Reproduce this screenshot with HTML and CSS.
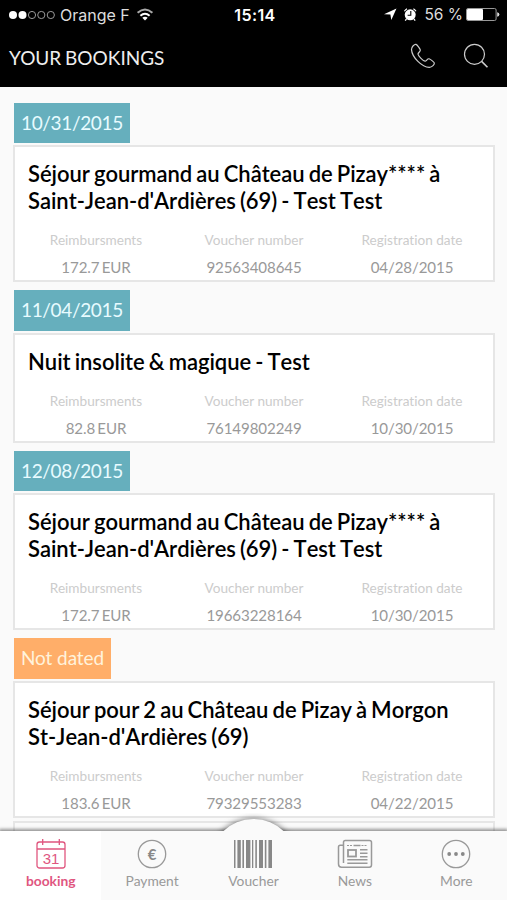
FILE: index.html
```html
<!DOCTYPE html>
<html lang="en">
<head>
  <meta charset="UTF-8">
  <title>Your Bookings</title>
  <link rel="stylesheet" href="styles.css">
</head>
<body>

  <header>
    <div class="status">
      <div class="carrier">
        <svg width="48" height="10" viewBox="0 0 48 10">
          <g fill="#fff"><circle cx="5" cy="5" r="4"/><circle cx="14.5" cy="5" r="4"/></g>
          <g fill="none" stroke="#999" stroke-width="1"><circle cx="24" cy="5" r="3.6"/><circle cx="33.3" cy="5" r="3.6"/><circle cx="42.8" cy="5" r="3.6"/></g>
        </svg>
        <span>Orange F</span>
        <svg class="wifi" width="18" height="13" viewBox="0 0 18 13" fill="none" stroke="#fff" stroke-width="2">
          <path d="M1.6 4.8Q9 -1.8 16.4 4.8" stroke="#aaa"/>
          <path d="M4.4 7.8Q9 3.8 13.6 7.8"/>
          <path d="M9 12.5L6.3 9.8Q9 7.6 11.7 9.8Z" fill="#fff" stroke="none"/>
        </svg>
      </div>
      <div class="time">15:14</div>
      <div class="battery">
        <svg width="34" height="15" viewBox="0 0 34 15">
          <path d="M0 7.3L12.5 1.5L7.3 13L6.4 7.5Z" fill="#fff"/>
          <circle cx="26.2" cy="7.8" r="5.5" fill="#fff"/>
          <path d="M20.4 4.2A7 7 0 0 1 23 1.7M29.4 1.7A7 7 0 0 1 32 4.2M22.5 12L21.2 13.6M29.9 12L31.2 13.6" stroke="#fff" stroke-width="1.2" fill="none"/>
          <path d="M26.8 4V8.2H23.6" stroke="#000" stroke-width="1.1" fill="none"/>
        </svg>
        <span>56 %</span>
        <svg class="cell" width="34" height="13" viewBox="0 0 34 13">
          <rect x=".5" y=".5" width="29.6" height="12" rx="1.5" fill="none" stroke="#999"/>
          <rect x="1" y="1" width="16" height="11" rx="1" fill="#fff"/>
          <path d="M31.2 4.3Q33.4 4.5 33.4 6.5Q33.4 8.5 31.2 8.7Z" fill="#ddd"/>
        </svg>
      </div>
    </div>
    <div class="navbar">
      <h1>YOUR BOOKINGS</h1>
      <svg class="phone" width="26" height="26" viewBox="0 0 26 26" fill="none" stroke="#ccc" stroke-width="1.2" stroke-linejoin="round">
        <path d="M6 1.4C4.6 1 1.4 3.7 1.5 6.6C1.8 10.5 4.2 14.7 7.9 18.4C11.5 22 16 24.3 19.3 24.4C22.1 24.2 24.8 21.4 24.3 19.9C23.9 18.8 20.4 16.3 19 15.8C17.3 15.4 16.4 18.3 15 18.2C13.1 17.8 8.5 13.2 8 11.2C7.8 9.7 10.8 8.5 10.3 6.8C9.9 5.5 7.3 1.8 6 1.4Z"/>
      </svg>
      <svg class="search" width="26" height="26" viewBox="0 0 26 26" fill="none" stroke="#ccc" stroke-width="1.2">
        <circle cx="11.5" cy="11.3" r="10"/><path d="M18.6 18.4L24.5 24.3" stroke-width="1.6"/>
      </svg>
    </div>
  </header>

  <main>
    <section class="booking">
      <div class="tag">10/31/2015</div>
      <div class="card">
        <h2>Séjour gourmand au Château de Pizay**** à<br>Saint-Jean-d'Ardières (69) - Test Test</h2>
        <dl>
          <div><dt>Reimbursments</dt><dd>172.7 EUR</dd></div>
          <div><dt>Voucher number</dt><dd>92563408645</dd></div>
          <div><dt>Registration date</dt><dd>04/28/2015</dd></div>
        </dl>
      </div>
    </section>

    <section class="booking">
      <div class="tag">11/04/2015</div>
      <div class="card">
        <h2>Nuit insolite &amp; magique - Test</h2>
        <dl>
          <div><dt>Reimbursments</dt><dd>82.8 EUR</dd></div>
          <div><dt>Voucher number</dt><dd>76149802249</dd></div>
          <div><dt>Registration date</dt><dd>10/30/2015</dd></div>
        </dl>
      </div>
    </section>

    <section class="booking">
      <div class="tag">12/08/2015</div>
      <div class="card">
        <h2>Séjour gourmand au Château de Pizay**** à<br>Saint-Jean-d'Ardières (69) - Test Test</h2>
        <dl>
          <div><dt>Reimbursments</dt><dd>172.7 EUR</dd></div>
          <div><dt>Voucher number</dt><dd>19663228164</dd></div>
          <div><dt>Registration date</dt><dd>10/30/2015</dd></div>
        </dl>
      </div>
    </section>

    <section class="booking">
      <div class="tag undated">Not dated</div>
      <div class="card">
        <h2>Séjour pour 2 au Château de Pizay à Morgon<br>St-Jean-d'Ardières (69)</h2>
        <dl>
          <div><dt>Reimbursments</dt><dd>183.6 EUR</dd></div>
          <div><dt>Voucher number</dt><dd>79329553283</dd></div>
          <div><dt>Registration date</dt><dd>04/22/2015</dd></div>
        </dl>
      </div>
      <div class="card next"></div>
    </section>
  </main>

  <nav class="tabs">
    <div class="bump"></div>
    <a class="tab active">
      <svg width="30" height="30" viewBox="0 0 30 30" fill="none" stroke="#e0567f" stroke-width="1.3">
        <rect x="1" y="3" width="28" height="26" rx="2.5"/><path d="M1 10H29M6.7 0V6M23.3 0V6"/>
        <text x="15" y="24.5" text-anchor="middle">31</text>
      </svg>
      <span>booking</span>
    </a>
    <a class="tab">
      <svg width="30" height="30" viewBox="0 0 30 30" fill="none" stroke="#999" stroke-width="1.3">
        <circle cx="15" cy="15" r="13.7"/>
        <text class="euro" x="15" y="20.5" text-anchor="middle">€</text>
      </svg>
      <span>Payment</span>
    </a>
    <a class="tab">
      <svg width="40" height="30" viewBox="0 0 40 30" fill="#888">
        <rect x="1" y="1" width="1.5" height="28"/><rect x="4.4" y="1" width="3.4" height="28"/><rect x="9.4" y="1" width="1.6" height="28"/><rect x="13" y="1" width="4.4" height="28"/><rect x="19" y="1" width="1.3" height="28"/><rect x="22.3" y="1" width="1.6" height="28"/><rect x="26" y="1" width="4" height="28"/><rect x="31.8" y="1" width="1.6" height="28"/><rect x="35.4" y="1" width="3.6" height="28"/>
      </svg>
      <span>Voucher</span>
    </a>
    <a class="tab">
      <svg width="36" height="30" viewBox="0 0 36 30" fill="none" stroke="#999" stroke-width="1.5">
        <path d="M6.5 24V3.2Q6.5 1.5 8.2 1.5H32.5Q34.5 1.5 34.5 3.5V26Q34.5 28.2 32.3 28.2H4.5Q1.5 28.2 1.5 25V8Q1.5 6.2 3.2 6.2H6.5"/>
        <path d="M10 6.5H15M24.5 6.5H30" stroke-width="1" stroke-dasharray="2 1"/><path d="M16.5 6.5H23.5"/>
        <rect x="11" y="11" width="8" height="6.5" stroke-width="1.8"/>
        <path d="M23 10.8H30.5M23 14.2H30.5M23 17.7H30.5M10.3 20.8H30.5M10.3 24.2H30.5" stroke-width="1.6"/>
      </svg>
      <span>News</span>
    </a>
    <a class="tab">
      <svg width="30" height="30" viewBox="0 0 30 30">
        <circle cx="15" cy="15" r="13.7" fill="none" stroke="#999" stroke-width="1.3"/>
        <g fill="#888"><circle cx="8.2" cy="15" r="1.9"/><circle cx="15" cy="15" r="1.9"/><circle cx="21.8" cy="15" r="1.9"/></g>
      </svg>
      <span>More</span>
    </a>
  </nav>

</body>
</html>
```

FILE: styles.css
```css
* {
  box-sizing: border-box;
}

body {
  margin: 0;
  height: 900px;
  overflow: hidden;
  display: flex;
  flex-direction: column;
  background: #fafafa;
  font-family: Lato, sans-serif;
  font-variant-ligatures: none;
}

header {
  flex: none;
  height: 87px;
  background: #000;
  color: #fff;
}

.status {
  height: 29px;
  display: grid;
  grid-template-columns: 1fr auto 1fr;
  align-items: center;
  padding: 0 7px 0 8px;
  font-family: Inter, sans-serif;
  font-size: 16px;
}

.carrier,
.battery {
  display: flex;
  align-items: center;
}

.carrier span {
  margin-left: 4px;
  color: #ddd;
}

.wifi {
  margin-left: 6px;
}

.time {
  padding-left: 2px;
  font-weight: 600;
  letter-spacing: 0.4px;
}

.battery {
  justify-content: flex-end;
}

.battery span {
  margin-left: 6px;
  color: #ddd;
  font-size: 15.5px;
}

.cell {
  margin-left: 3px;
}

.navbar {
  height: 58px;
  display: flex;
  align-items: center;
  padding: 0 18px 4px 9px;
}

h1 {
  flex: 1;
  margin: 2px 0 0;
  font-size: 19px;
  font-weight: 400;
  word-spacing: -1px;
  color: #eee;
}

.search {
  margin-left: 27px;
}

main {
  flex: 1;
  min-height: 0;
  overflow: hidden;
  padding: 16px 12px 0 13px;
}

.booking {
  margin-bottom: 8px;
}

.tag {
  width: fit-content;
  height: 40.3px;
  margin: 0 0 2px 1px;
  padding: 0 7px;
  line-height: 40px;
  background: #66afbd;
  color: #e8fbff;
  font-size: 19px;
  letter-spacing: -0.35px;
}

.tag.undated {
  background: #ffae69;
  color: #fff3dc;
  letter-spacing: -0.1px;
}

.card {
  padding: 13px 2px 0;
  background: #fff;
  border: 2px solid #e6e6e6;
}

.card.next {
  height: 60px;
  margin-top: 3px;
  background: #fafafa;
}

h2 {
  margin: 0 0 13px 11px;
  font-size: 22px;
  line-height: 27px;
  font-weight: 600;
  font-kerning: none;
  letter-spacing: -0.05px;
  word-spacing: -1.3px;
  color: #000;
  white-space: nowrap;
}

dl {
  display: grid;
  grid-template-columns: repeat(3, 1fr);
  margin: 0;
  text-align: center;
}

dt {
  font-size: 13.6px;
  line-height: 26px;
  color: #ccc;
}

dd {
  margin: 0;
  font-size: 15.1px;
  line-height: 28px;
  height: 27.2px;
  letter-spacing: -0.1px;
  word-spacing: -1.5px;
  color: #999;
}

.tabs {
  position: relative;
  flex: none;
  height: 69px;
  display: grid;
  grid-template-columns: repeat(5, 1fr);
  background: #fafafa;
  box-shadow: 0 -1px 3px 1px rgba(0, 0, 0, 0.4);
}

/* round hump behind the voucher tab */
.bump {
  position: absolute;
  left: 50%;
  top: -12px;
  width: 87px;
  height: 87px;
  margin-left: -43.5px;
  border-radius: 50%;
  background: #fafafa;
  box-shadow: 0 0 6px rgba(0, 0, 0, 0.6);
  clip-path: inset(-6px 0 75px 0);
}

.tab {
  position: relative;
  display: flex;
  flex-direction: column;
  align-items: center;
  padding-top: 8px;
  color: #999;
  font-size: 13.8px;
}

.tab span {
  margin-top: 3px;
  line-height: 17px;
}

.tab.active {
  background: #fff;
  color: #e0567f;
  font-weight: 700;
}

.tab text {
  fill: #e0567f;
  stroke: none;
  font: 15px "Liberation Sans", sans-serif;
}

.tab .euro {
  fill: #888;
  font: bold 15px Lato, sans-serif;
}
```
